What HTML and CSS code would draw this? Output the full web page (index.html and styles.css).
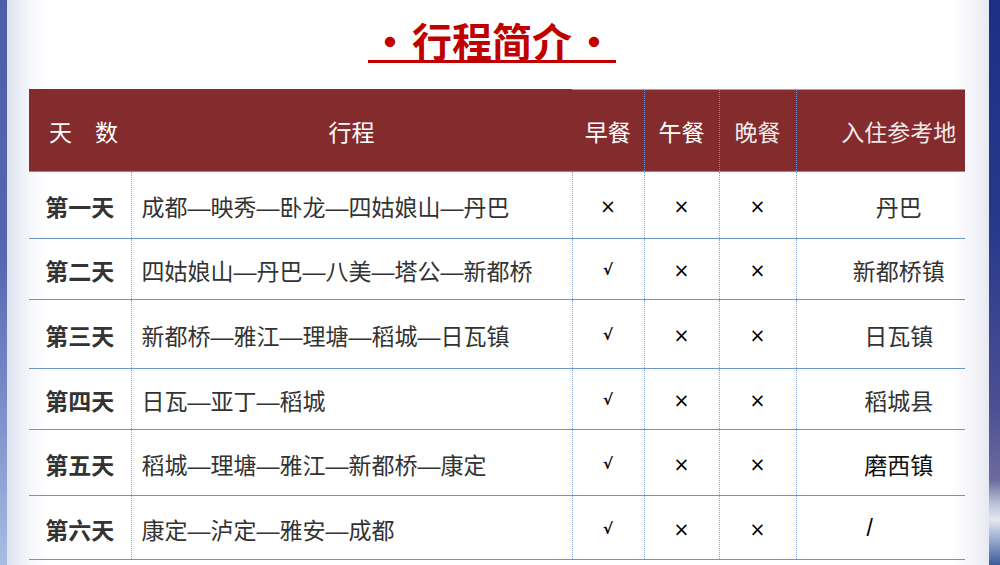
FILE: index.html
```html
<!DOCTYPE html>
<html lang="zh-CN">
<head>
<meta charset="utf-8">
<title>行程简介</title>
<link rel="stylesheet" href="styles.css">
</head>
<body>
<div class="frame">
  <div class="edge edge-left"></div>
  <main class="page">
    <h1 class="title"><span class="title-text"><span class="dot">·</span>行程简介<span class="dot">·</span></span></h1>
    <table class="trip">
      <colgroup>
        <col class="c-day"><col class="c-route"><col class="c-meal1"><col class="c-meal2"><col class="c-meal3"><col class="c-stay">
      </colgroup>
      <thead>
        <tr>
          <th class="h-day">天　数</th>
          <th class="h-route">行程</th>
          <th class="h-meal h-first">早餐</th>
          <th class="h-meal">午餐</th>
          <th class="h-meal thin">晚餐</th>
          <th class="h-stay thin">入住参考地</th>
        </tr>
      </thead>
      <tbody>
        <tr>
          <td class="day">第一天</td>
          <td class="route">成都—映秀—卧龙—四姑娘山—丹巴</td>
          <td class="mark">×</td><td class="mark">×</td><td class="mark">×</td>
          <td class="stay">丹巴</td>
        </tr>
        <tr>
          <td class="day">第二天</td>
          <td class="route">四姑娘山—丹巴—八美—塔公—新都桥</td>
          <td class="mark check">√</td><td class="mark">×</td><td class="mark">×</td>
          <td class="stay">新都桥镇</td>
        </tr>
        <tr>
          <td class="day">第三天</td>
          <td class="route">新都桥—雅江—理塘—稻城—日瓦镇</td>
          <td class="mark check">√</td><td class="mark">×</td><td class="mark">×</td>
          <td class="stay">日瓦镇</td>
        </tr>
        <tr>
          <td class="day">第四天</td>
          <td class="route">日瓦—亚丁—稻城</td>
          <td class="mark check">√</td><td class="mark">×</td><td class="mark">×</td>
          <td class="stay">稻城县</td>
        </tr>
        <tr>
          <td class="day">第五天</td>
          <td class="route">稻城—理塘—雅江—新都桥—康定</td>
          <td class="mark check">√</td><td class="mark">×</td><td class="mark">×</td>
          <td class="stay dark">磨西镇</td>
        </tr>
        <tr>
          <td class="day">第六天</td>
          <td class="route">康定—泸定—雅安—成都</td>
          <td class="mark check">√</td><td class="mark">×</td><td class="mark">×</td>
          <td class="stay slash">/</td>
        </tr>
      </tbody>
    </table>
  </main>
  <div class="edge edge-right"></div>
</div>
</body>
</html>
```

FILE: styles.css
```css
html, body {
  margin: 0;
  padding: 0;
  height: 100%;
}

body {
  font-family: "Noto Sans CJK SC", "Noto Sans", sans-serif;
  color: #333;
  overflow: hidden;
}

.frame {
  display: grid;
  grid-template-columns: 7px 982px 11px;
  height: 565px;
}

.edge-left {
  background: linear-gradient(180deg, #4b5faa 0%, #5467b0 45%, #7d94cc 75%, #a9bde2 100%);
}

.edge-right {
  background: linear-gradient(180deg, #1d2f84 0%, #28398b 40%, #4c4f93 72%, #6c6c9f 85%, #b8c0d6 89%, #e4e8ef 92%, #8fa3c8 96%, #3c5a96 100%);
}

.page {
  background: linear-gradient(90deg, #dde2ef 0px, #f4f6fa 22px, #ffffff 40px, #ffffff 945px, #eef0f6 975px, #e6e8f1 982px);
  display: flex;
  flex-direction: column;
  align-items: flex-start;
}

.title {
  margin: 0;
  padding-top: 20px;
  height: 89px;
  box-sizing: border-box;
  align-self: stretch;
  display: flex;
  justify-content: center;
  padding-right: 12px;
  font-size: 40px;
  font-weight: bold;
  line-height: 1;
  color: #c00000;
}

.title-text {
  display: inline-block;
  height: 40px;
  border-bottom: 3px solid #c00000;
}

.dot {
  margin: 0 2px;
}

.trip {
  margin-left: 22px;
  width: 936px;
  table-layout: fixed;
  border-collapse: collapse;
  font-size: 23px;
}

.c-day { width: 102px; }
.c-route { width: 441px; }
.c-meal1 { width: 72px; }
.c-meal2 { width: 75px; }
.c-meal3 { width: 77px; }
.c-stay { width: 169px; }

.trip th {
  background: #842c2d;
  color: #ffffff;
  font-weight: normal;
  height: 81px;
  padding: 0;
  border-top: 1px solid #842c2d;
  border-bottom: 1px solid #6f8fc8;
}

.trip th.h-meal,
.trip th.h-stay {
  border-top-color: #8aa4d4;
}

.trip th.h-meal + th {
  border-left: 1px dotted #6f8fc8;
}

.h-day {
  text-align: left;
  padding-left: 20px !important;
}

.h-route, .h-meal { text-align: center; }

.h-stay {
  text-align: center;
  padding-left: 36px !important;
}

.thin { color: #f1e9ea !important; }

.trip td {
  padding: 2px 0 0 0;
  border-bottom: 1px solid #6f93cc;
  border-left: 1px dotted #86a6d8;
}

.trip td:first-child { border-left: none; }

.trip tbody tr:nth-child(1) td { height: 64px; }
.trip tbody tr:nth-child(2) td { height: 58px; }
.trip tbody tr:nth-child(3) td { height: 66px; }
.trip tbody tr:nth-child(4) td { height: 58px; }
.trip tbody tr:nth-child(5) td { height: 63px; }
.trip tbody tr:nth-child(6) td { height: 61px; }

.day {
  text-align: center;
  font-weight: bold;
  font-size: 23px;
  color: #333;
}

.route {
  padding-left: 10px !important;
  font-family: "Liberation Sans", "Noto Sans CJK SC", sans-serif;
  color: #333;
  white-space: nowrap;
}

.mark {
  text-align: center;
  font-family: "DejaVu Sans", sans-serif;
  font-size: 19px;
  color: #000;
}

.check {
  font-size: 15px;
  font-weight: bold;
}

.stay {
  text-align: center;
  padding-left: 36px !important;
  color: #333;
}

.stay.dark { color: #111; }

.stay.slash {
  color: #000;
  padding-left: 0 !important;
  padding-right: 22px !important;
  font-family: "Liberation Sans", sans-serif;
}
```
